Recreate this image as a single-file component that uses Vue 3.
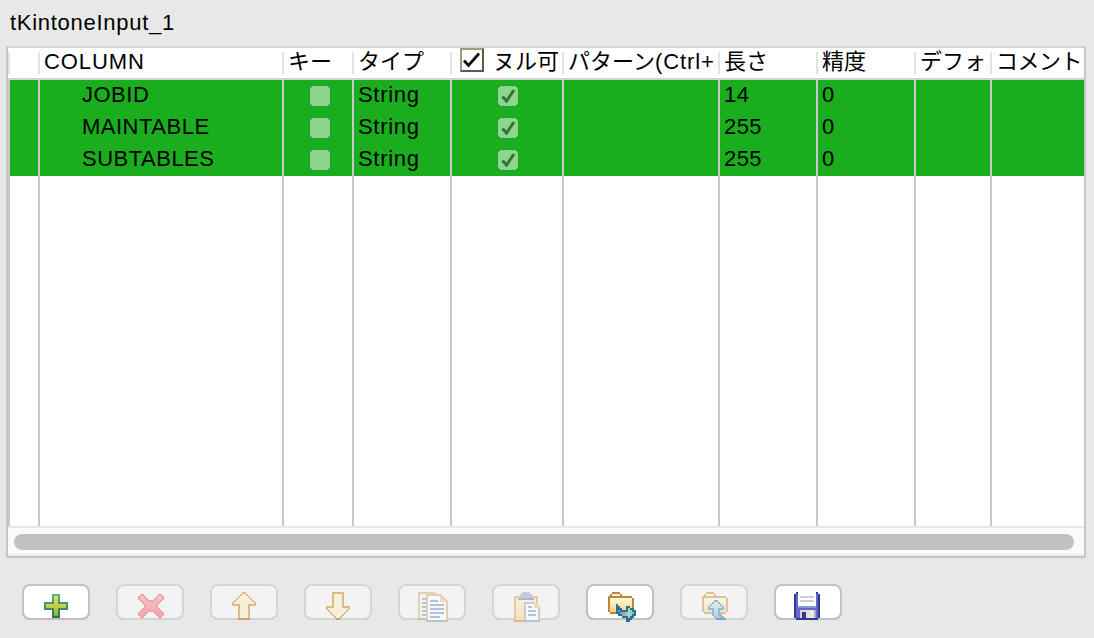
<script setup>
const columns = [
  { title: '', width: 30, cells: ['', '', ''] },
  { title: 'COLUMN', width: 244, kind: 'name', cells: ['JOBID', 'MAINTABLE', 'SUBTABLES'] },
  { title: 'キー', width: 70, kind: 'check', cells: [false, false, false] },
  { title: 'タイプ', width: 98, kind: 'type', cells: ['String', 'String', 'String'] },
  { title: 'ヌル可能', width: 112, kind: 'check', toggle: true, cells: [true, true, true] },
  { title: 'パターン', hint: '(Ctrl+Space)', width: 156, cells: ['', '', ''] },
  { title: '長さ', width: 98, cells: ['14', '255', '255'] },
  { title: '精度', width: 98, cells: ['0', '0', '0'] },
  { title: 'デフォルト', width: 76, cells: ['', '', ''] },
  { title: 'コメント', width: 94, snug: true, cells: ['', '', ''] },
]
const gridStyle = { gridTemplateColumns: columns.map((c) => c.width + 'px').join(' ') }
const buttons = [
  { id: 'add', on: true }, { id: 'remove' }, { id: 'up' }, { id: 'down' }, { id: 'copy' },
  { id: 'paste' }, { id: 'import', on: true }, { id: 'export' }, { id: 'save', on: true },
]
</script>

<template>
  <main class="panel">
    <h1 class="title">tKintoneInput_1</h1>
    <section class="table">
      <div class="head" :style="gridStyle">
        <div v-for="(c, i) in columns" :key="i" class="th">
          <svg v-if="c.toggle" class="toggle" width="24" height="24" viewBox="0 0 24 24">
            <path d="M0 0H24V24H0Z" fill="#5d5a45" />
            <path d="M0 0H24L22 2H2V22L0 24Z" fill="#a09c7c" />
            <path d="M2 2H22V22H2Z" fill="#fff" />
            <path d="M4 12.5L8.5 17.5L19 5.5" fill="none" stroke="#111" stroke-width="2.8" />
          </svg>
          <span class="label" :class="{ latin: c.title === 'COLUMN', snug: c.snug }">{{ c.title }}<span v-if="c.hint" class="hint">{{ c.hint }}</span></span>
        </div>
      </div>
      <div class="body" :style="gridStyle">
        <div v-for="(c, i) in columns" :key="i" class="col">
          <div v-for="(v, r) in c.cells" :key="r" class="cell" :class="c.kind">
            <span v-if="c.kind === 'check'" class="box" :class="{ nullable: c.toggle }">
              <svg v-if="v" width="20" height="20" viewBox="0 0 20 20">
                <path d="M4.5 10.5L8.5 15L16 4" fill="none" stroke="#2f7535" stroke-width="3" />
              </svg>
            </span>
            <template v-else>{{ v }}</template>
          </div>
        </div>
      </div>
      <div class="scroll"><div class="thumb"></div></div>
    </section>
    <nav class="tools">
      <button v-for="b in buttons" :key="b.id" class="btn" :class="{ on: b.on }">
        <svg width="68" height="38" viewBox="0 0 34 19" shape-rendering="crispEdges">
          <defs>
            <linearGradient id="gp" x2="0" y2="1"><stop stop-color="#5eb184" /><stop offset="1" stop-color="#2b704b" /></linearGradient>
            <linearGradient id="gy" x2="0" y2="1"><stop stop-color="#dce36e" /><stop offset=".5" stop-color="#c7ce48" /><stop offset="1" stop-color="#81b33c" /></linearGradient>
            <linearGradient id="gx" x2="0" y2="1"><stop stop-color="#efc5bf" /><stop offset="1" stop-color="#f3a5ab" /></linearGradient>
            <linearGradient id="ga"><stop stop-color="#f5eddb" /><stop offset=".5" stop-color="#f9f0da" /><stop offset="1" stop-color="#f5ecdf" /></linearGradient>
            <linearGradient id="gf" x2="0" y2="1"><stop stop-color="#fff9dc" /><stop offset="1" stop-color="#f9d477" /></linearGradient>
            <linearGradient id="gb"><stop stop-color="#6e93c4" /><stop offset=".4" stop-color="#9cadd0" /><stop offset=".7" stop-color="#a8dfb8" /><stop offset="1" stop-color="#7fb8b0" /></linearGradient>
            <linearGradient id="gc" x2="0" y2="1"><stop stop-color="#f8eee4" /><stop offset="1" stop-color="#f5dfb9" /></linearGradient>
            <linearGradient id="gu" x2="0" y2="1"><stop stop-color="#dfeee4" /><stop offset="1" stop-color="#bacddd" /></linearGradient>
            <linearGradient id="gs"><stop stop-color="#d0d0d0" /><stop offset="1" stop-color="#f1eee7" /></linearGradient>
          </defs>

          <g v-if="b.id === 'add'">
            <path d="M15 5H19V9H23V13H19V17H15V13H11V9H15Z" fill="url(#gp)" />
            <path d="M16 6H18V10H22V12H18V16H16V12H12V10H16Z" fill="url(#gy)" />
          </g>
          <g v-else-if="b.id === 'remove'">
            <path d="M12 5H14V6H15V7H16V8H19V7H20V6H21V5H23V6H24V8H23V9H22V10H21V12H22V13H23V14H24V16H23V17H21V16H20V15H19V14H16V15H15V16H14V17H12V16H11V14H12V13H13V12H14V10H13V9H12V8H11V6H12Z" fill="#eca4a7" />
            <path d="M12 6H14V7H15V8H16V9H19V8H20V7H21V6H23V8H22V9H21V10H20V12H21V13H22V14H23V16H21V15H20V14H19V13H16V14H15V15H14V16H12V14H13V13H14V12H15V10H14V9H13V8H12Z" fill="url(#gx)" />
          </g>
          <g v-else-if="b.id === 'up'">
            <path d="M16 4H18V5H19V6H20V7H21V8H22V9H23V11H20V18H14V11H11V9H12V8H13V7H14V6H15V5H16Z" fill="#dabd86" />
            <path d="M16 5H18V6H19V7H20V8H21V9H22V10H19V17H15V10H12V9H13V8H14V7H15V6H16Z" fill="url(#ga)" />
            <path d="M14 17H20V18H14Z" fill="#c5a465" />
          </g>
          <g v-else-if="b.id === 'down'">
            <path d="M14 4H20V11H23V13H22V14H21V15H20V16H19V17H18V18H16V17H15V16H14V15H13V14H12V13H11V11H14Z" fill="#dabd86" />
            <path d="M15 5H19V12H22V13H21V14H20V15H19V16H18V17H16V16H15V15H14V14H13V13H12V12H15Z" fill="url(#ga)" />
            <path d="M16 17H18V18H16Z" fill="#c5a465" />
          </g>
          <g v-else-if="b.id === 'copy'">
            <path d="M10 4H19V5H21V18H10Z" fill="#e2d3ae" />
            <path d="M11 5H19V17H11Z" fill="#f2f3f6" />
            <path d="M12 7H14V8H12ZM12 9H14V10H12ZM12 11H14V12H12ZM12 13H14V14H12ZM12 15H14V16H12Z" fill="#b9c5dc" />
            <path d="M14 5H22V6H23V7H24V8H25V19H14Z" fill="#dfd1b2" />
            <path d="M15 6H21V9H24V18H15Z" fill="#f5f7fa" />
            <path d="M21 6H22V7H23V8H24V9H21Z" fill="#edddbf" />
            <path d="M16 8H20V9H16ZM16 10H23V11H16ZM16 12H23V13H16ZM16 14H23V15H16ZM16 16H21V17H16Z" fill="#b5c1dc" />
            <path d="M10 17H14V18H10ZM14 18H25V19H14Z" fill="#bfc1b8" />
          </g>
          <g v-else-if="b.id === 'paste'">
            <path d="M11 6H23V19H11Z" fill="#e8c9a2" />
            <path d="M12 7H22V18H12Z" fill="url(#gc)" />
            <path d="M15 4H19V5H20V6H21V8H13V7H14V5H15Z" fill="#c3cbd8" />
            <path d="M13 7H21V8H13Z" fill="#adb8ca" />
            <path d="M16 9H22V10H23V11H24V19H16Z" fill="#cbcbc8" />
            <path d="M17 10H21V12H23V18H17Z" fill="#f5f8fc" />
            <path d="M21 9H22V10H23V11H24V12H21Z" fill="#ead9ba" />
            <path d="M18 11H20V12H18ZM18 13H22V14H18ZM18 15H22V16H18Z" fill="#b5c3dc" />
            <path d="M11 18H16V19H11Z" fill="#d0b998" /><path d="M16 18H24V19H16Z" fill="#b9c4d1" />
          </g>
          <g v-else-if="b.id === 'import' || b.id === 'export'">
            <g :class="{ faded: b.id === 'export' }">
              <path d="M13 4H17V5H18V6H23V7H24V14H23V15H12V14H11V6H12V5H13Z" fill="#c0843a" />
              <path d="M13 5H17V6H13Z" fill="#fff3d5" />
              <path d="M12 7H23V14H12Z" fill="url(#gf)" />
            </g>
            <g v-if="b.id === 'import'">
              <path d="M15 10H16V11H17V12H18V13H20V11H22V12H24V13H25V16H24V17H23V18H22V19H20V17H18V16H16V15H15Z" fill="#2b6f9c" />
              <path d="M16 13H17V14H21V12H22V13H23V14H24V15H23V16H22V17H21V16H18V15H17V14H16Z" fill="url(#gb)" />
            </g>
            <g v-else>
              <path d="M17 8H19V9H20V10H21V11H22V13H20V15H21V16H22V17H23V18H18V17H17V16H16V13H14V11H15V10H16V9H17Z" fill="#91bddb" />
              <path d="M17 9H19V10H20V11H21V12H19V16H20V17H18V16H17V12H15V11H16V10H17Z" fill="url(#gu)" />
              <path d="M18 17H23V18H18Z" fill="#78a6c3" />
            </g>
          </g>
          <g v-else>
            <path d="M11 4H12V10H21V4H22V5H23V17H22V18H11V17H10V5H11Z" fill="#34378e" />
            <path d="M11 5H12V11H21V5H22V17H11Z" fill="#6468c7" />
            <path d="M12 4H21V11H12Z" fill="#fff" />
            <path d="M12 11H21V12H12Z" fill="#7f9bd8" />
            <path d="M13 6H20V7H13ZM13 8H20V9H13Z" fill="#cecece" />
            <path d="M13 13H20V17H13Z" fill="url(#gs)" />
            <path d="M14 14H16V17H14Z" fill="#303494" />
            <path d="M20 13H21V17H20Z" fill="#a5a6da" />
          </g>
        </svg>
      </button>
    </nav>
  </main>
</template>

<style>
body { background: #e8e8e8; }
</style>

<style scoped>
* { box-sizing: border-box; }
.panel {
  width: 1094px; height: 638px; padding: 0 8px 0 6px; overflow: hidden;
  background: #e8e8e8; color: #000;
  font: 22px/32px "Liberation Sans", "Noto Sans CJK JP", sans-serif;
}
.title { height: 46px; margin: 0; padding: 7px 0 0 4px; font-size: 22px; line-height: 32px; font-weight: 400; letter-spacing: .72px; }
.table { height: 512px; border: 2px solid #c6c6c6; border-top-color: #d2d2d2; background: #fff; }
.head { display: grid; height: 32px; border-bottom: 2px solid #d2d2d2; }
.th {
  display: flex; height: 22px; margin-top: 4px; padding: 0 2px 0 4px;
  border-left: 2px solid #e2e2e2; min-width: 0;
}
.label { flex: 1; min-width: 0; height: 32px; margin-top: -6px; line-height: 32px; white-space: nowrap; overflow: hidden; }
.latin { letter-spacing: .9px; }
.hint { letter-spacing: .9px; }
.snug { letter-spacing: -.5px; }
.toggle { flex: none; margin: -4px 9px 0 4px; }
.body { display: grid; height: 446px; }
.col { border-left: 2px solid #c9c9c9; }
.cell { height: 32px; padding-left: 4px; line-height: 30px; letter-spacing: .4px; background: #1aad1e; }
.name { padding-left: 42px; letter-spacing: .5px; }
.type { letter-spacing: .7px; }
.check { padding: 5px 0 0 25px; }
.box { display: block; width: 22px; height: 22px; border: 1px solid #229b29; border-radius: 5px; background: #8cd68f; }
.nullable { margin-left: 20px; }
.box svg { display: block; }
.scroll { height: 30px; padding: 6px 10px 0 6px; border-top: 2px solid #e7e7e7; background: #fafafa; border-bottom: 2px solid #ededed; }
.thumb { height: 16px; border-radius: 8px; background: #c1c1c1; }
.tools { display: flex; gap: 26px; padding: 26px 0 0 16px; }
.btn {
  display: grid; width: 68px; height: 36px; padding: 0; overflow: visible;
  border: 0; border-radius: 8px; background: #f3f3f3;
  box-shadow: inset 0 0 0 2px #d5d5d5, inset 0 -2px 0 #c9c9c9;
}
.on { background: #fff; box-shadow: inset 0 0 0 2px #c1c1c1, inset 0 -2px 0 #aaa; }
.btn svg { display: block; }
.faded { opacity: .43; }
</style>
